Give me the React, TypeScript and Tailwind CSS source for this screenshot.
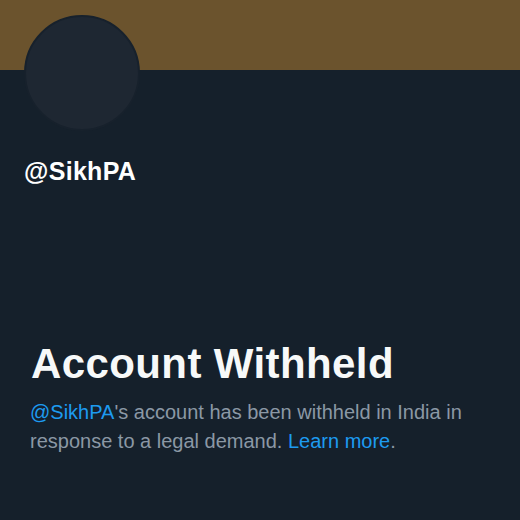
export default function App() {
  return (
    <div
      className="w-[520px] h-[520px] bg-[#15202b] overflow-hidden flex flex-col"
      style={{ fontFamily: '"Liberation Sans", Arial, sans-serif' }}
    >
      <div className="h-[70px] w-full bg-[#6b532d] shrink-0" />
      <div className="ml-[24px] -mt-[55px] w-[116px] h-[116px] rounded-full bg-[#1e2732] border-2 border-[#17212c] shrink-0" />
      <div className="ml-[24px] mt-[26px] text-[25px] leading-[28px] font-bold text-white tracking-[0.3px]">
        @SikhPA
      </div>
      <div className="ml-[31px] mt-[155px] text-[42px] leading-[48px] font-bold text-[#f7f9f9] tracking-[0.4px]">
        Account Withheld
      </div>
      <p className="ml-[30px] mt-[10px] w-[470px] text-[20px] leading-[29px] text-[#8b98a5]">
        <span className="text-[#1d9bf0]">@SikhPA</span>'s account has been withheld in India in response to a legal demand.{' '}
        <span className="text-[#1d9bf0]">Learn more</span>.
      </p>
    </div>
  );
}
